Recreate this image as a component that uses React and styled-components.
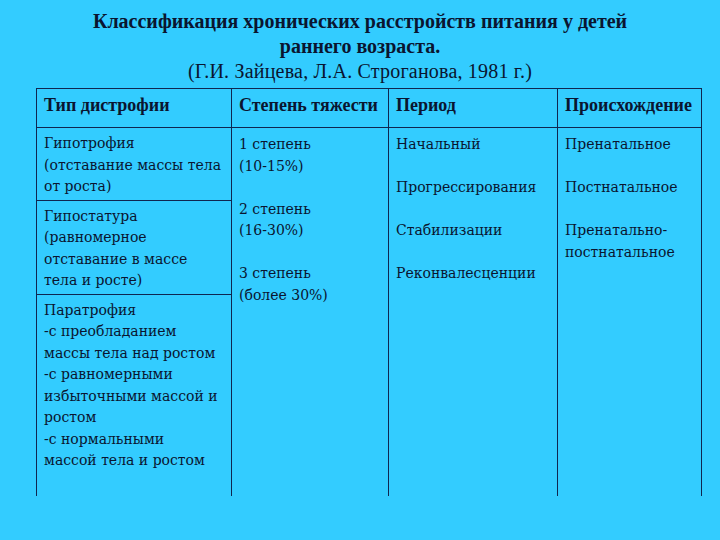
import React from "react";
import styled, { createGlobalStyle } from "styled-components";

const GlobalStyle = createGlobalStyle`
  html, body {
    margin: 0;
    padding: 0;
    background: #33ccff;
  }
  body {
    width: 720px;
    height: 540px;
    overflow: hidden;
    color: #0a1530;
  }
`;

const columns = [
  { title: "Тип дистрофии", width: 195 },
  { title: "Степень тяжести", width: 157 },
  { title: "Период", width: 169 },
  { title: "Происхождение", width: 144 },
];

const types = [
  ["Гипотрофия", "(отставание массы тела", "от роста)"],
  ["Гипостатура", "(равномерное", "отставание в массе", "тела и росте)"],
  [
    "Паратрофия",
    "-с преобладанием",
    "массы тела над ростом",
    "-с равномерными",
    "избыточными массой и",
    "ростом",
    "-с нормальными",
    "массой тела и ростом",
  ],
];

const degrees = [
  ["1 степень", "(10-15%)"],
  ["2 степень", "(16-30%)"],
  ["3 степень", "(более 30%)"],
];

const periods = [
  ["Начальный"],
  ["Прогрессирования"],
  ["Стабилизации"],
  ["Реконвалесценции"],
];

const origins = [
  ["Пренатальное"],
  ["Постнатальное"],
  ["Пренатально-", "постнатальное"],
];

function GroupList({ groups }) {
  return groups.map((g) => (
    <Group key={g[0]}>
      {g.map((l) => (
        <Line key={l}>{l}</Line>
      ))}
    </Group>
  ));
}

export default function App() {
  return (
    <>
      <GlobalStyle />
      <Page>
        <Title>
          <TitleLine>Классификация хронических расстройств питания у детей</TitleLine>
          <TitleLine>раннего возраста.</TitleLine>
          <Source>(Г.И. Зайцева, Л.А. Строганова, 1981 г.)</Source>
        </Title>
        <Table>
          <colgroup>
            {columns.map((c) => (
              <col key={c.title} style={{ width: c.width }} />
            ))}
          </colgroup>
          <thead>
            <tr>
              {columns.map((c) => (
                <HeadCell key={c.title}>{c.title}</HeadCell>
              ))}
            </tr>
          </thead>
          <tbody>
            {types.map((lines, i) => (
              <tr key={lines[0]}>
                <TypeCell $last={i === types.length - 1}>
                  {lines.map((l) => (
                    <Line key={l}>{l}</Line>
                  ))}
                </TypeCell>
                {i === 0 && (
                  <>
                    <SpanCell rowSpan={3}>
                      <GroupList groups={degrees} />
                    </SpanCell>
                    <SpanCell rowSpan={3}>
                      <GroupList groups={periods} />
                    </SpanCell>
                    <SpanCell rowSpan={3}>
                      <GroupList groups={origins} />
                    </SpanCell>
                  </>
                )}
              </tr>
            ))}
          </tbody>
        </Table>
      </Page>
    </>
  );
}

const Page = styled.div`
  padding-top: 9px;
  font-family: "DejaVu Serif", "Liberation Serif", serif;
`;

const Title = styled.div`
  text-align: center;
  font-family: "Liberation Serif", serif;
  font-size: 20px;
  line-height: 25px;
  margin-bottom: 4px;
`;

const TitleLine = styled.div`
  font-weight: bold;
`;

const Source = styled.div`
  letter-spacing: 0.2px;
`;

const Table = styled.table`
  margin-left: 36px;
  width: 665px;
  table-layout: fixed;
  border-collapse: collapse;
  font-size: 14px;
  line-height: 21.5px;
`;

const HeadCell = styled.th`
  height: 39px;
  padding: 0 6px 4px 7px;
  box-sizing: border-box;
  border: 1px solid #0f2650;
  text-align: left;
  vertical-align: middle;
  font-family: "Liberation Serif", serif;
  font-size: 18px;
  font-weight: bold;
  white-space: nowrap;
`;

const TypeCell = styled.td`
  padding: ${(p) => (p.$last ? "5px 7px 24px" : "5px 7px 2px")};
  border-left: 1px solid #0f2650;
  border-right: 1px solid #0f2650;
  border-bottom: ${(p) => (p.$last ? "none" : "1px solid #0f2650")};
  vertical-align: top;
  white-space: nowrap;
`;

const SpanCell = styled.td`
  padding: 6px 7px 0;
  border-left: 1px solid #0f2650;
  border-right: 1px solid #0f2650;
  vertical-align: top;
  white-space: nowrap;
`;

const Group = styled.div`
  margin-bottom: 21.5px;
`;

const Line = styled.div``;
